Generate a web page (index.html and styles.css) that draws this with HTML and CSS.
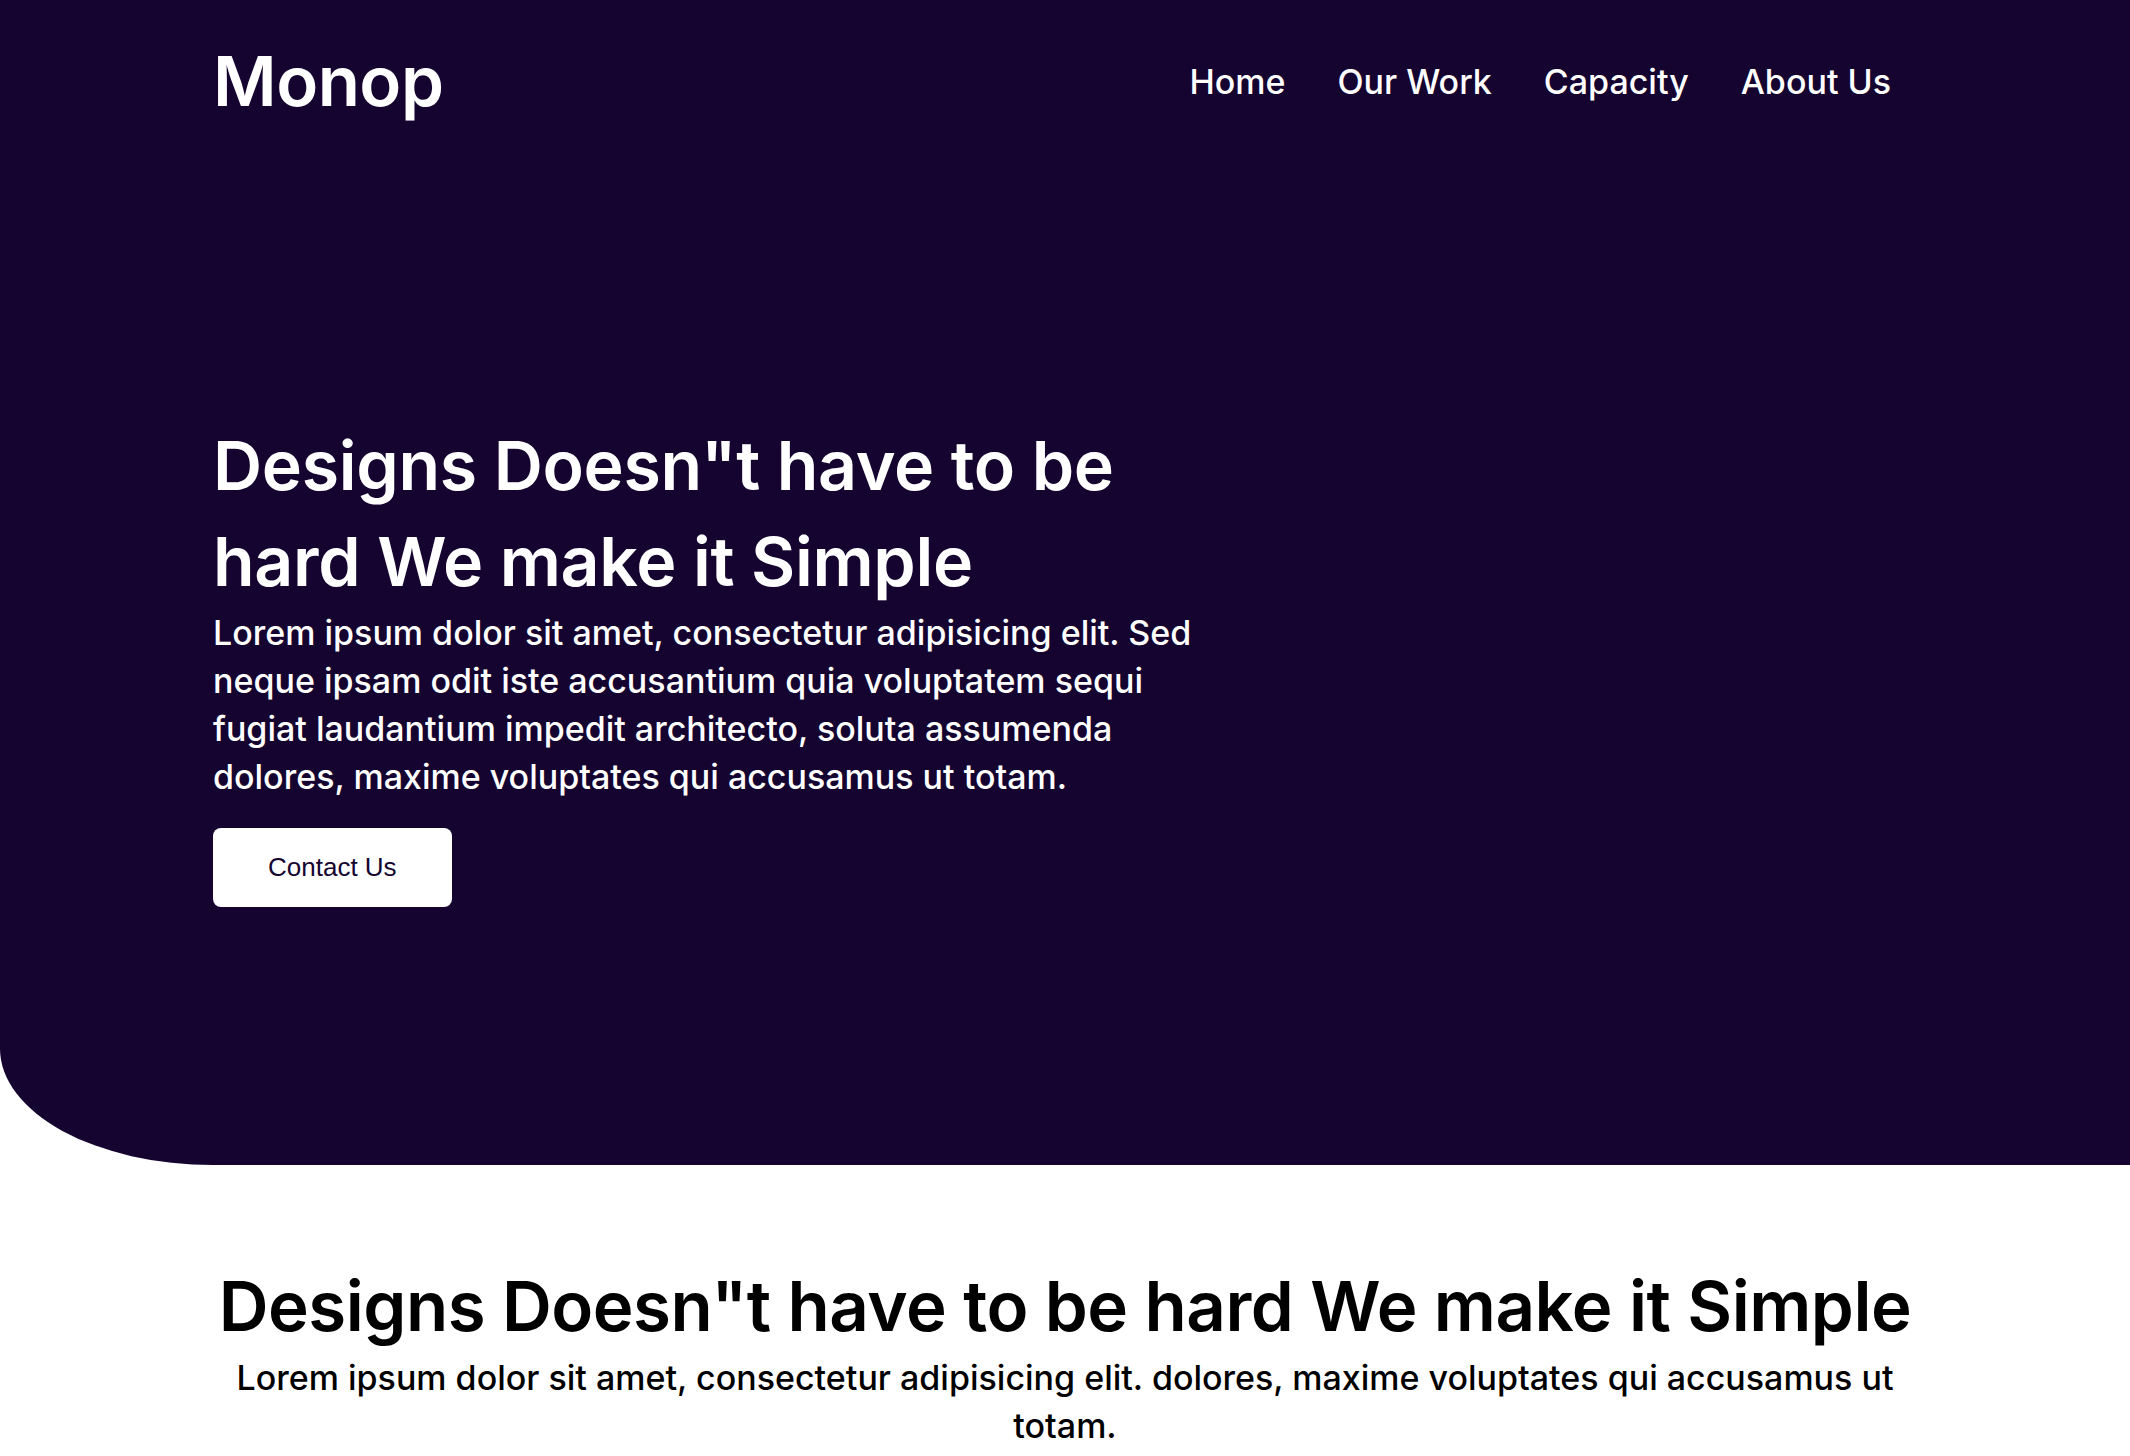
FILE: index.html
```html
<!DOCTYPE html>
<html lang="en">
<head>
<meta charset="utf-8">
<title>Monop</title>
<link rel="stylesheet" href="styles.css">
</head>
<body>
<header class="hero">
  <nav class="navbar">
    <div class="logo">Monop</div>
    <ul class="nav-links">
      <li><a href="#">Home</a></li>
      <li><a href="#">Our Work</a></li>
      <li><a href="#">Capacity</a></li>
      <li><a href="#">About Us</a></li>
    </ul>
  </nav>
  <div class="hero-body">
    <div class="hero-content">
      <h1 class="hero-title">Designs Doesn"t have to be hard We make it Simple</h1>
      <p class="hero-text">Lorem ipsum dolor sit amet, consectetur adipisicing elit. Sed neque ipsam odit iste accusantium quia voluptatem sequi fugiat laudantium impedit architecto, soluta assumenda dolores, maxime voluptates qui accusamus ut totam.</p>
      <button class="btn">Contact Us</button>
    </div>
  </div>
</header>
<section class="intro">
  <h2 class="intro-title">Designs Doesn"t have to be hard We make it Simple</h2>
  <p class="intro-text">Lorem ipsum dolor sit amet, consectetur adipisicing elit. dolores, maxime voluptates qui accusamus ut totam.</p>
</section>
</body>
</html>
```
FILE: styles.css
```css
* {
  box-sizing: border-box;
}

body {
  margin: 0;
  font-family: Inter, "Noto Sans", sans-serif;
  background: #ffffff;
  color: #000000;
}

.hero {
  height: 80vh;
  background: #150430;
  border-bottom-left-radius: 10%;
  display: flex;
  flex-direction: column;
  color: #ffffff;
}

.navbar {
  width: 80%;
  margin: 0 auto;
  height: 162px;
  display: flex;
  justify-content: space-between;
  align-items: center;
}

.logo {
  font-size: 69px;
  font-weight: 600;
  letter-spacing: -0.5px;
}

.nav-links {
  list-style: none;
  margin: 0 26px 0 0;
  padding: 0;
  display: flex;
  gap: 52px;
}

.nav-links a {
  color: #ffffff;
  text-decoration: none;
  font-size: 34px;
  font-weight: 500;
}

.hero-body {
  flex: 1;
  width: 80%;
  margin: 0 auto;
  padding-bottom: 2px;
  display: flex;
  align-items: center;
}

.hero-content {
  max-width: 1000px;
}

.hero-title {
  margin: 0;
  font-size: 68px;
  font-weight: 600;
  line-height: 96px;
  letter-spacing: -0.3px;
}

.hero-text {
  margin: 0;
  font-size: 34px;
  font-weight: 500;
  line-height: 48px;
}

.btn {
  margin-top: 27px;
  background: #ffffff;
  color: #150430;
  border: none;
  border-radius: 8px;
  padding: 24px 55px;
  font-family: "Liberation Sans", Arial, sans-serif;
  font-size: 26px;
  line-height: 31px;
  cursor: pointer;
}

.intro {
  width: 80%;
  margin: 0 auto;
  padding-top: 93px;
  text-align: center;
}

.intro-title {
  margin: 0;
  font-size: 69px;
  font-weight: 600;
  line-height: 96px;
  letter-spacing: -0.5px;
}

.intro-text {
  margin: 0;
  font-size: 34px;
  font-weight: 500;
  line-height: 48px;
}
```
